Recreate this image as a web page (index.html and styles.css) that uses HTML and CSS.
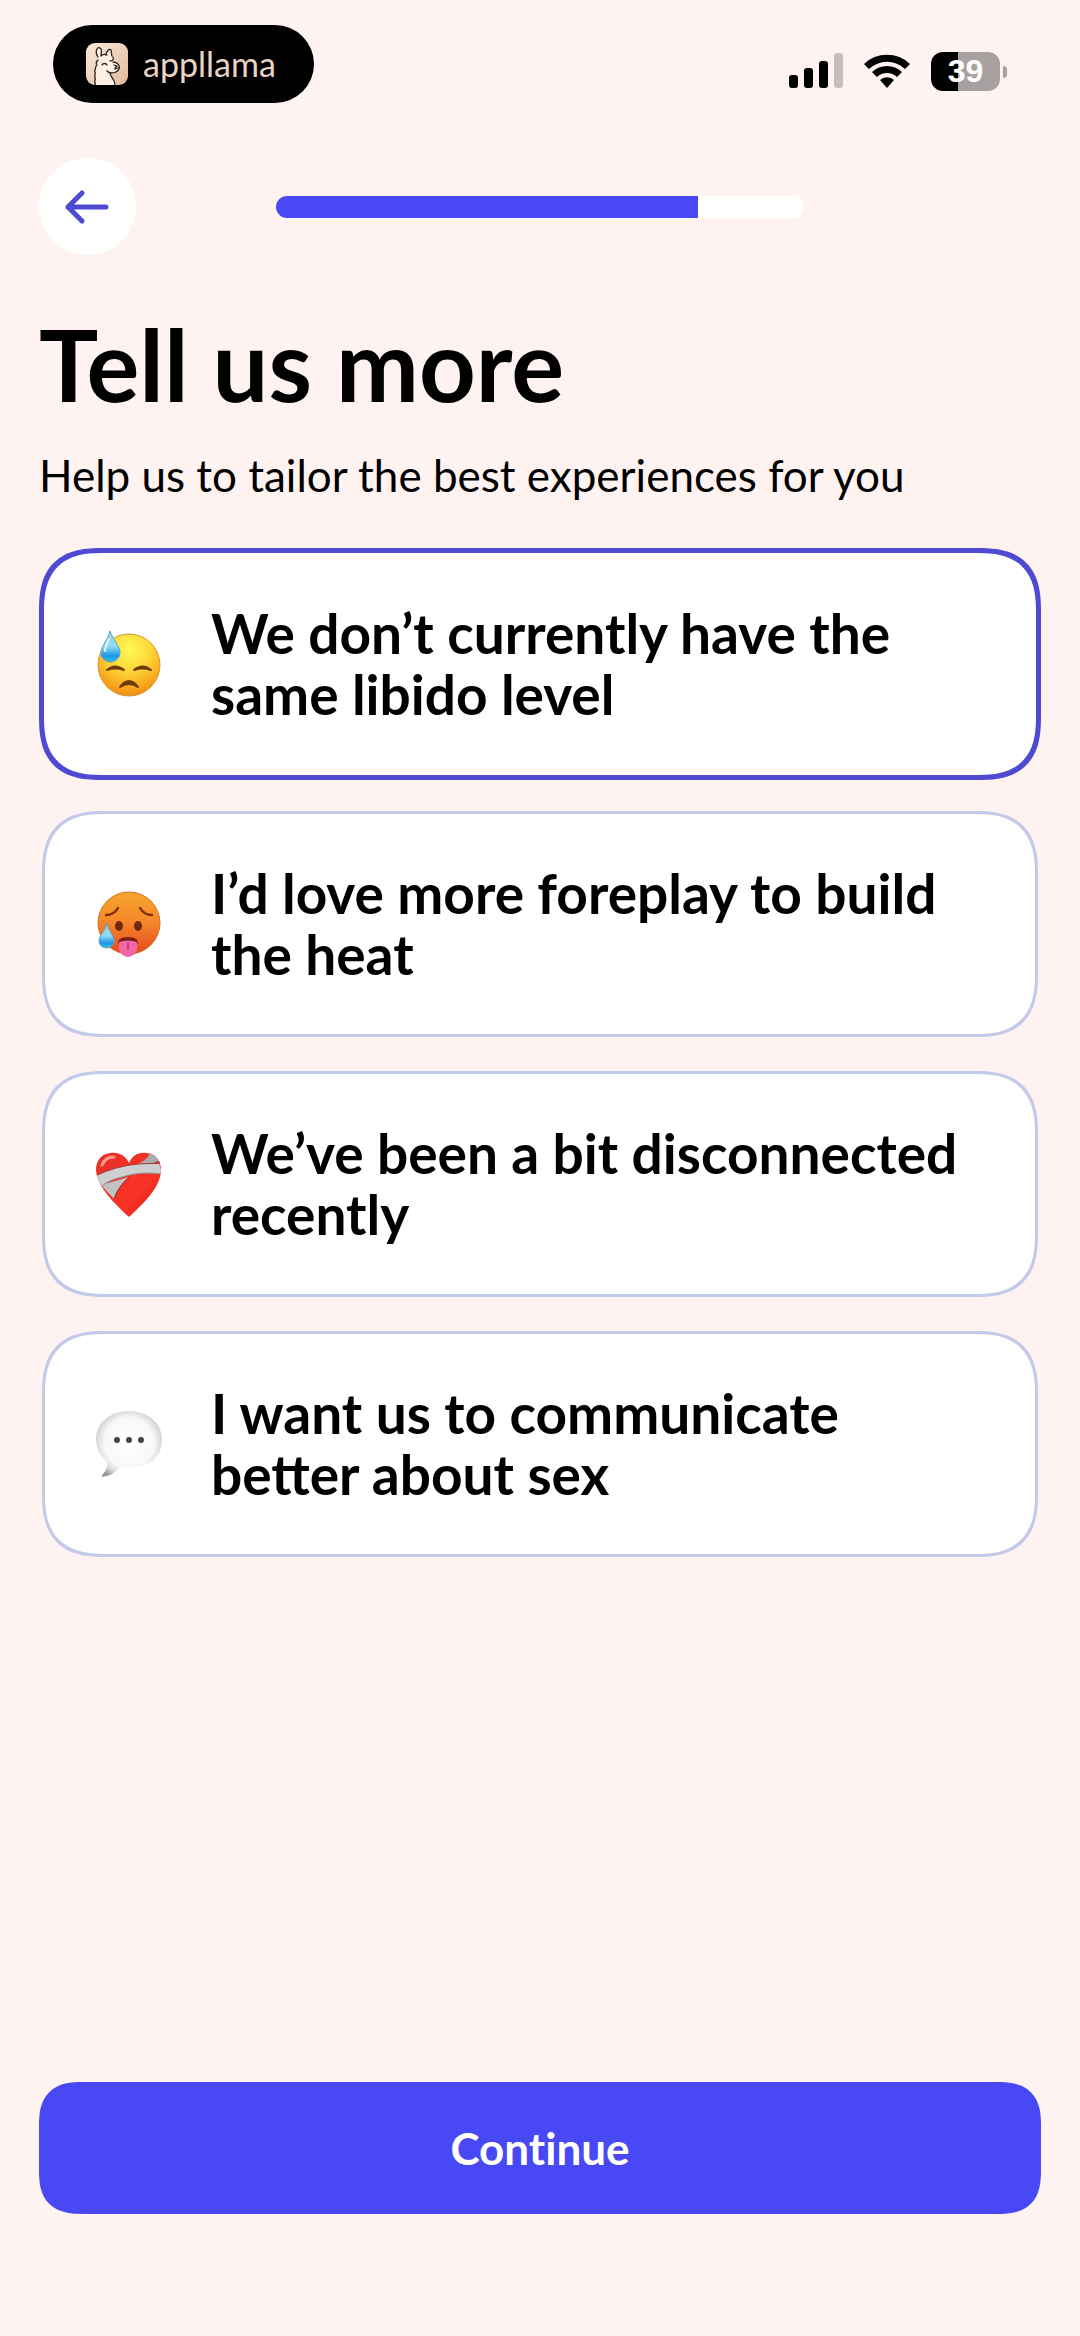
FILE: index.html
```html
<!DOCTYPE html>
<html lang="en">
<head>
	<meta charset="utf-8">
	<meta name="viewport" content="width=device-width, initial-scale=1">
	<title>Tell us more</title>
	<link rel="stylesheet" href="styles.css">
</head>
<body>
	<div class="status-bar">
		<div class="brand">
			<svg class="brand-logo" viewBox="0 0 42 42" aria-hidden="true">
				<defs>
					<linearGradient id="logoBg" x1="0" y1="0" x2="1" y2="1">
						<stop offset="0" stop-color="#fbe9d8"/>
						<stop offset="1" stop-color="#dfbb9c"/>
					</linearGradient>
				</defs>
				<rect width="42" height="42" rx="9" fill="url(#logoBg)"/>
				<path d="M9 42c1-3-1-4 0-6s-1-4 0-6 0-4 1-5-1-4 2-6c-2-3 0-4 0-6-3-6 2-12 4-6l0 6c2-1 3-1 4-1 0-4 4-7 5-5 1 2 0 4 1 6 3 1 3 4 1 5 6 1 7 5 5 9-2 3-5 4-8 3-1 5 5 6 5 12z" fill="#fdf0e3"/>
				<path d="M9 42c1-2-1-3 0-5s-1-3 0-5-1-3 0-5 0-4 2-5c-2-3 0-4 1-5M12 14C8 8 12 2 15 6c1 2 0 5 0 7M20 12c0-4 4-7 5-5 1 2 0 4 1 6M15 13c2-2 4-2 6-1M24 18c2 0 4-1 3-4M27 19c5 0 7 4 6 7-2 4-5 4-8 4-2 0-3-1-4-2M24 30c0 4 5 6 5 12M16 22c1-2 4-2 5 0M28 22l3 1-2 2M29 26l3-1" fill="none" stroke="#26201e" stroke-width="1.3" stroke-linecap="round" stroke-linejoin="round"/>
			</svg>
			<span class="brand-name">appllama</span>
		</div>
		<div class="status-icons">
			<svg class="signal" viewBox="0 0 54 36" aria-hidden="true">
				<rect x="0" y="22" width="9" height="13" rx="3"/>
				<rect x="15" y="15" width="9" height="20" rx="3"/>
				<rect x="30" y="8" width="9" height="27" rx="3"/>
				<rect x="45" y="0" width="9" height="35" rx="3" fill="#c8bcbd"/>
			</svg>
			<svg class="wifi" viewBox="0 0 48 36" aria-hidden="true">
				<path d="M1 11a33 33 0 0 1 46 0l-5 5a26 26 0 0 0-36 0z"/>
				<path d="M9 19a21.500 21.500 0 0 1 30 0l-5 5a14.500 14.500 0 0 0-20 0z"/>
				<path d="M17 27a10 10 0 0 1 14 0l-7 8z"/>
			</svg>
			<div class="battery"><span class="battery-level">39</span></div>
		</div>
	</div>

	<header class="top-nav">
		<button class="back" type="button" aria-label="Back">
			<svg viewBox="0 0 48 36" aria-hidden="true">
				<path d="M18 4L4 18l14 14M4 18h38" fill="none" stroke="#4e4bd2" stroke-width="5" stroke-linecap="round" stroke-linejoin="round"/>
			</svg>
		</button>
		<div class="progress" role="progressbar" aria-valuenow="80" aria-valuemin="0" aria-valuemax="100">
			<div class="progress-fill" style="width: 80%"></div>
		</div>
	</header>

	<main>
		<h1>Tell us more</h1>
		<p class="subtitle">Help us to tailor the best experiences for you</p>

		<form class="options" id="options">
			<label class="option">
				<input type="checkbox" name="topic" value="libido" checked>
				<svg class="emoji" viewBox="0 0 70 70" aria-hidden="true">
					<defs>
						<radialGradient id="yellow" cx=".5" cy=".25" r=".8">
							<stop offset="0" stop-color="#fffa55"/>
							<stop offset=".45" stop-color="#fed536"/>
							<stop offset=".85" stop-color="#f79a16"/>
							<stop offset="1" stop-color="#d9822a"/>
						</radialGradient>
						<linearGradient id="drop" x1="0" y1="0" x2="0" y2="1">
							<stop offset="0" stop-color="#a9cbd3"/>
							<stop offset=".5" stop-color="#8fdcf8"/>
							<stop offset=".8" stop-color="#1b96e6"/>
							<stop offset="1" stop-color="#43bdf0"/>
						</linearGradient>
					</defs>
					<circle cx="35" cy="36" r="31" fill="url(#yellow)" stroke="#dc9630" stroke-width="1"/>
					<path d="M13 41q8-7 17 0q-9-3-17 0zM40 41q9-7 17 0q-8-3-17 0z" fill="#6e3c08" stroke="#6e3c08" stroke-width="2" stroke-linejoin="round"/>
					<path d="M26 58q9-12 18 0q-9-6-18 0z" fill="#6e3c08" stroke="#6e3c08" stroke-width="2" stroke-linejoin="round"/>
					<path d="M16 2C14 11 7 17 7 24a9.500 9 0 0 0 19 0C26 17 19 11 16 2z" fill="url(#drop)" stroke="#54a8c6" stroke-width="1"/>
					<path d="M15 10q-4 8-4 12" fill="none" stroke="#dff8ff" stroke-width="2" stroke-linecap="round"/>
				</svg>
				<span class="option-text">We don’t currently have the same libido level</span>
			</label>

			<label class="option">
				<input type="checkbox" name="topic" value="foreplay">
				<svg class="emoji" viewBox="0 0 70 70" aria-hidden="true">
					<defs>
						<linearGradient id="hot" x1="0" y1="0" x2="0" y2="1">
							<stop offset="0" stop-color="#f6a62c"/>
							<stop offset=".5" stop-color="#f5862a"/>
							<stop offset="1" stop-color="#e4481f"/>
						</linearGradient>
					</defs>
					<circle cx="35" cy="34" r="31" fill="url(#hot)" stroke="#d5702a" stroke-width="1"/>
					<path d="M12 26q8 0 12-7M46 19q4 7 12 7" fill="none" stroke="#80300d" stroke-width="2.500" stroke-linecap="round"/>
					<ellipse cx="25" cy="37" rx="4" ry="5" fill="#6f2810"/>
					<ellipse cx="44" cy="37" rx="4" ry="5" fill="#6f2810"/>
					<path d="M25 54q0-5 9-5t9 5z" fill="#7c1d14" stroke="#7c1d14" stroke-width="2" stroke-linejoin="round"/>
					<path d="M25 53q9-3 18 0v6a9 9 0 0 1-18 0z" fill="#f467a7"/>
					<path d="M34 54v6" stroke="#d63d85" stroke-width="2" stroke-linecap="round"/>
					<path d="M13 34C11 43 5 46 5 52a7.500 7 0 0 0 15 0C20 46 14 42 13 34z" fill="url(#drop)" stroke="#54a8c6" stroke-width="1"/>
				</svg>
				<span class="option-text">I’d love more foreplay to build the heat</span>
			</label>

			<label class="option">
				<input type="checkbox" name="topic" value="disconnected">
				<svg class="emoji" viewBox="0 0 70 70" aria-hidden="true">
					<defs>
						<linearGradient id="red" x1="0" y1="0" x2="1" y2="1">
							<stop offset="0" stop-color="#e5302c"/>
							<stop offset=".6" stop-color="#fa3324"/>
							<stop offset="1" stop-color="#d81c1c"/>
						</linearGradient>
						<clipPath id="heart">
							<path d="M35 14C31 5 23 3 16 4 7 5 2 12 2 21 3 38 21 55 35 68 49 55 67 38 67 21 67 11 61 4 52 4 44 3 38 7 35 14z"/>
						</clipPath>
					</defs>
					<g clip-path="url(#heart)">
						<rect width="70" height="70" fill="url(#red)"/>
						<path d="M8 16q3-8 12-8" fill="none" stroke="#f79a94" stroke-width="3" stroke-linecap="round"/>
						<path d="M44 15Q54 10 56 4l12 5v5z" fill="#a9abad"/>
						<path d="M7 36l13 14q4-12 15-22z" fill="#bfc1c2"/>
						<path d="M20 50q4-12 15-22" fill="none" stroke="#8d2622" stroke-width="1"/>
						<path d="M1 27Q22 17 44 15L65 14l3 11Q46 22 28 28 15 31 8 37z" fill="#cdcfd0"/>
						<path d="M1 27Q22 17 44 15L67 14" fill="none" stroke="#a23a37" stroke-width="1"/>
						<path d="M68 25Q46 22 28 28 15 31 8 37" fill="none" stroke="#8f9193" stroke-width="1"/>
						<path d="M61 14l5-1" stroke="#c1272d" stroke-width="2"/>
					</g>
				</svg>
				<span class="option-text">We’ve been a bit disconnected recently</span>
			</label>

			<label class="option">
				<input type="checkbox" name="topic" value="communicate">
				<svg class="emoji" viewBox="0 0 70 70" aria-hidden="true">
					<defs>
						<radialGradient id="bubble" cx=".5" cy=".48" r=".58">
							<stop offset="0" stop-color="#ffffff"/>
							<stop offset=".65" stop-color="#f8f8f8"/>
							<stop offset=".85" stop-color="#d8d8d8"/>
							<stop offset="1" stop-color="#999999"/>
						</radialGradient>
					</defs>
					<path d="M35 2C54 2 68 14 68 31S54 59 35 59q-5 0-9-1-7 9-18 10-1-1 1-3 5-5 4-12Q2 44 2 31C2 14 16 2 35 2z" fill="url(#bubble)"/>
					<circle cx="23" cy="31" r="3" fill="#444"/>
					<circle cx="35" cy="31" r="3" fill="#444"/>
					<circle cx="47" cy="31" r="3" fill="#444"/>
				</svg>
				<span class="option-text">I want us to communicate better about sex</span>
			</label>
		</form>
	</main>

	<button class="continue" type="submit" form="options">Continue</button>
</body>
</html>
```
FILE: styles.css
```css
* {
	box-sizing: border-box;
}

body {
	display: flex;
	flex-direction: column;
	min-height: 100vh;
	margin: 0;
	padding: 25px 39px 122px;
	background: #fff3f1;
	color: #000;
	font-family: Lato, "Liberation Sans", sans-serif;
}

/* Status bar */
.status-bar {
	display: flex;
	justify-content: space-between;
	padding: 0 34px 0 14px;
}

.brand {
	display: flex;
	align-items: center;
	gap: 15px;
	height: 78px;
	padding: 0 38px 0 33px;
	border-radius: 39px;
	background: #000;
}

.brand-logo {
	width: 42px;
	height: 42px;
}

.brand-name {
	color: #e8d3c3;
	font-size: 34px;
	line-height: 40px;
}

.status-icons {
	display: flex;
	align-items: center;
	gap: 20px;
	padding-top: 14px;
}

.signal {
	width: 54px;
	height: 36px;
}

.wifi {
	width: 48px;
	height: 36px;
}

.battery {
	position: relative;
	width: 69px;
	height: 39px;
	margin-right: 7px;
	border-radius: 12px;
	background: linear-gradient(to right, #000 39%, #a8a1a1 39%);
	color: #fff;
	font: bold 32px/39px "Liberation Sans", sans-serif;
	text-align: center;
}

.battery::after {
	content: "";
	position: absolute;
	top: 14px;
	right: -7px;
	width: 4px;
	height: 12px;
	border-radius: 0 4px 4px 0;
	background: #a8a1a1;
}

/* Navigation */
.top-nav {
	display: grid;
	grid-template-columns: 97px 1fr 97px;
	align-items: center;
	gap: 140px;
	margin-top: 55px;
}

.back {
	display: flex;
	align-items: center;
	justify-content: center;
	width: 97px;
	height: 97px;
	padding: 0;
	border: none;
	border-radius: 50%;
	background: #fff;
	cursor: pointer;
}

.back svg {
	width: 48px;
	height: 36px;
}

.progress {
	height: 22px;
	border-radius: 11px;
	background: #fff;
	overflow: hidden;
}

.progress-fill {
	height: 100%;
	background: #4848f4;
}

/* Heading */
h1 {
	margin: 54px 0 0;
	font-size: 99px;
	font-weight: bold;
	line-height: 110px;
}

.subtitle {
	margin: 28px 0 0;
	font-size: 44px;
	line-height: 56px;
}

/* Options */
.options {
	display: flex;
	flex-direction: column;
	gap: 28px;
	margin-top: 45px;
}

.option {
	display: flex;
	align-items: center;
	gap: 47px;
	min-height: 226px;
	margin: 3px;
	padding: 0 69px 0 49px;
	border: 3px solid #c3c9e8;
	border-radius: 64px;
	corner-shape: superellipse(1.4);
	background: #fff;
	cursor: pointer;
}

.option:has(input:checked) {
	min-height: 232px;
	margin: 0;
	padding: 0 70px 0 50px;
	border: 5px solid #4e4bd2;
}

.option input {
	position: absolute;
	opacity: 0;
}

.emoji {
	flex: none;
	width: 70px;
	height: 70px;
}

.option-text {
	font-size: 55px;
	font-weight: bold;
	line-height: 61px;
}

/* Footer */
.continue {
	height: 132px;
	margin-top: auto;
	border: none;
	border-radius: 44px;
	corner-shape: superellipse(1.4);
	background: #4848f4;
	color: #fff;
	font: bold 44px/56px Lato, "Liberation Sans", sans-serif;
	font-variant-ligatures: none;
	cursor: pointer;
}
```
